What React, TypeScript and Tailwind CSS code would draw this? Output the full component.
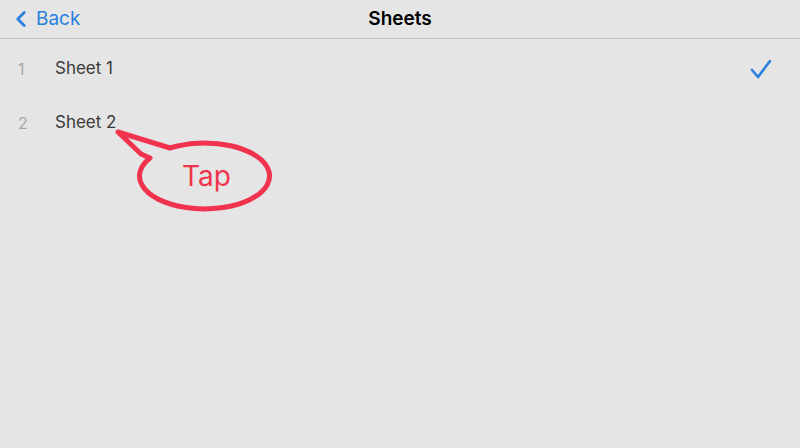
import { ChevronLeft } from "lucide-react";

const sheets = [
  { n: 1, name: "Sheet 1", active: true },
  { n: 2, name: "Sheet 2", active: false },
];

function Check() {
  return (
    <svg width="22" height="20" viewBox="0 0 22 20" fill="none">
      <path d="M2 11 L8 18 L20 2" stroke="#2a7fe0" strokeWidth="2.6" strokeLinecap="round" strokeLinejoin="round" />
    </svg>
  );
}

function Callout() {
  return (
    <div className="absolute left-0 top-0 h-[448px] w-[800px] pointer-events-none">
      <svg width="800" height="448" className="absolute left-0 top-0">
        <path
          d="M170 148 L118 132 L141 154 L150 158 A65 33 0 1 0 170 148 Z"
          fill="none"
          stroke="#f2334d"
          strokeWidth="5"
          strokeLinejoin="round"
        />
      </svg>
      <span className="absolute left-[182px] top-[162px] text-[28px] leading-none text-[#f2334d]">Tap</span>
    </div>
  );
}

export default function App() {
  return (
    <div className="relative h-[448px] w-[800px] overflow-hidden bg-[#e5e5e5] font-['Inter','Liberation_Sans',sans-serif]">
      <header className="relative flex h-[39px] items-center border-b border-[#bdbdbd]">
        <div className="flex items-center pl-[8px] text-[#2a7fe0]">
          <ChevronLeft className="h-[26px] w-[26px]" strokeWidth={2.6} />
          <span className="ml-[2px] text-[19px]">Back</span>
        </div>
        <h1 className="absolute left-1/2 -translate-x-1/2 text-[19px] font-semibold text-black">Sheets</h1>
      </header>
      <ul className="pt-[3px]">
        {sheets.map((s) => (
          <li key={s.n} className="flex h-[54px] items-center pr-[28px]">
            <span className="w-[55px] pl-[18px] text-[16px] text-[#a5a5a5]">{s.n}</span>
            <span className="flex-1 text-[17px] text-[#3a3a3a]">{s.name}</span>
            {s.active && <Check />}
          </li>
        ))}
      </ul>
      <Callout />
    </div>
  );
}
